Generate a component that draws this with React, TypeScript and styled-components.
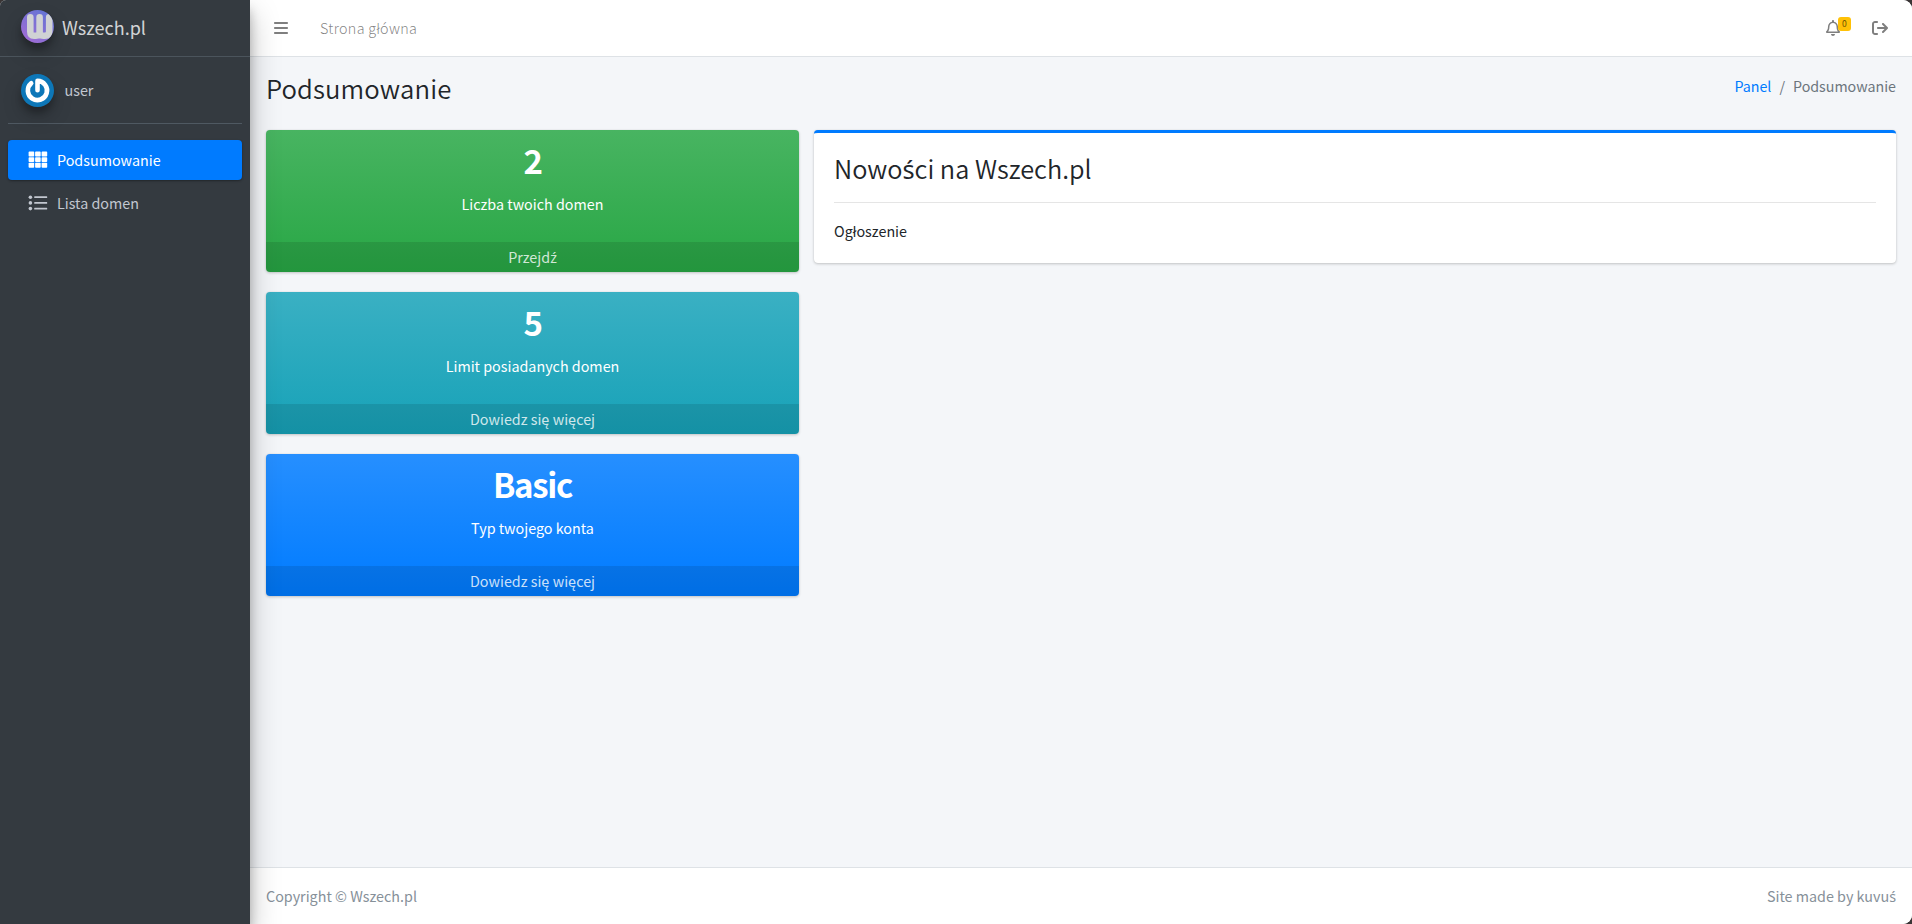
import React from 'react';
import styled, { createGlobalStyle } from 'styled-components';
import { FaRegBell } from 'react-icons/fa';
import { FaBars, FaArrowRightFromBracket } from 'react-icons/fa6';

const GlobalStyle = createGlobalStyle`
  *, *::before, *::after { box-sizing: border-box; }
  html { background: #3a3535; }
  body {
    margin: 0;
    font-family: "Noto Sans CJK SC", "Noto Sans", sans-serif;
    font-size: 14.33px;
    line-height: 24px;
    color: #212529;
  }
  a { text-decoration: none; color: inherit; }
  h1, h2, h3, p { margin: 0; font-weight: 400; }
`;

const Shell = styled.div`
  display: flex;
  height: 924px;
  overflow: hidden;
  border-radius: 6px 9px 9px 0;
  background: #f4f6f9;
`;

const Sidebar = styled.aside`
  position: relative;
  z-index: 2;
  flex: 0 0 250px;
  background: #343a40;
  box-shadow: 0 14px 28px rgba(0, 0, 0, 0.25), 0 10px 10px rgba(0, 0, 0, 0.22);
`;

const Brand = styled.a`
  display: flex;
  align-items: center;
  gap: 8px;
  height: 57px;
  padding: 0 0 3px 21px;
  border-bottom: 1px solid #4b545c;
  color: rgba(255, 255, 255, 0.8);
  font-size: 18px;
`;

const RoundMark = styled.svg`
  display: block;
  flex: none;
  width: 33px;
  height: 33px;
  border-radius: 50%;
  box-shadow: 0 10px 20px rgba(0, 0, 0, 0.19), 0 6px 6px rgba(0, 0, 0, 0.23);
`;

const UserPanel = styled.div`
  display: flex;
  align-items: center;
  gap: 10.5px;
  height: 67px;
  margin: 0 8px 16px;
  padding: 0 0 0 13px;
  border-bottom: 1px solid #4f5962;
  color: #c2c7d0;
`;

const Nav = styled.nav`
  display: flex;
  flex-direction: column;
  gap: 3px;
  padding: 0 8px;
`;

const NavItem = styled.a<{ $active?: boolean }>`
  display: flex;
  align-items: center;
  gap: 9px;
  height: 40px;
  padding-left: 20px;
  border-radius: 4px;
  color: ${(p) => (p.$active ? '#fff' : '#c2c7d0')};
  background: ${(p) => (p.$active ? '#007bff' : 'transparent')};
  box-shadow: ${(p) => (p.$active ? '0 1px 3px rgba(0,0,0,.12), 0 1px 2px rgba(0,0,0,.24)' : 'none')};
`;

const NavIcon = styled.svg`
  width: 20px;
  height: 18px;
  margin-top: -1px;
  fill: currentColor;
`;

const Main = styled.div`
  flex: 1;
  display: flex;
  flex-direction: column;
  min-width: 0;
`;

const Topbar = styled.header`
  display: flex;
  align-items: center;
  height: 57px;
  padding: 0 24px 0 23px;
  background: #fff;
  border-bottom: 1px solid #dee2e6;
  color: rgba(0, 0, 0, 0.5);
`;

const TopLink = styled.a`
  margin-left: 31px;
  font-weight: 300;
  letter-spacing: 0.33px;
`;

const TopActions = styled.div`
  display: flex;
  align-items: center;
  gap: 31px;
  margin-left: auto;
  svg { display: block; }
`;

const Bell = styled.span`
  position: relative;
`;

const Badge = styled.span`
  position: absolute;
  left: 13px;
  top: -3px;
  width: 13px;
  height: 14px;
  border-radius: 3px;
  background: #ffc107;
  color: #6b5200;
  font-size: 8.6px;
  line-height: 12px;
  text-align: center;
`;

const PageHead = styled.div`
  display: flex;
  justify-content: space-between;
  height: 73px;
  padding: 0 16px;
`;

const PageTitle = styled.h1`
  padding-top: 13px;
  font-size: 25.7px;
  letter-spacing: 0.12px;
  line-height: 35px;
  && { font-weight: 350; }
`;

const Crumbs = styled.div`
  display: flex;
  gap: 8px;
  padding-top: 17px;
  color: #6c757d;
  font-size: 14.25px;
  a { color: #007bff; }
`;

const Content = styled.main`
  flex: 1;
  display: grid;
  grid-template-columns: 533px 1fr;
  gap: 15px;
  align-items: start;
  padding: 0 16px;
`;

const Stack = styled.div`
  display: flex;
  flex-direction: column;
  gap: 20px;
`;

const StatBox = styled.section<{ $from: string; $to: string }>`
  display: flex;
  flex-direction: column;
  height: 142px;
  border-radius: 4px;
  overflow: hidden;
  color: #fff;
  text-align: center;
  background: linear-gradient(180deg, ${(p) => p.$from}, ${(p) => p.$to});
  box-shadow: 0 0 1px rgba(0, 0, 0, 0.125), 0 1px 3px rgba(0, 0, 0, 0.2);
`;

const StatBody = styled.div`
  height: 112px;
  padding-top: 9px;
`;

const StatValue = styled.h3`
  margin-bottom: 11px;
  letter-spacing: -1.3px;
  line-height: 42px;
  && { font-size: 33px; font-weight: 700; }
`;

const StatLink = styled.a`
  height: 30px;
  line-height: 30px;
  background: rgba(0, 0, 0, 0.1);
  color: rgba(255, 255, 255, 0.8);
`;

const NewsCard = styled.section`
  height: 133px;
  padding: 16px 20px 20px;
  background: #fff;
  border-top: 3px solid #007bff;
  border-radius: 4px;
  box-shadow: 0 0 1px rgba(0, 0, 0, 0.125), 0 1px 3px rgba(0, 0, 0, 0.2);
`;

const NewsTitle = styled.h2`
  height: 54px;
  margin-bottom: 16px;
  border-bottom: 1px solid #e5e5e5;
  font-size: 25.3px;
  line-height: 38px;
  && { font-weight: 350; }
`;

const Footer = styled.footer`
  display: flex;
  align-items: center;
  justify-content: space-between;
  height: 57px;
  padding: 0 16px;
  background: #fff;
  border-top: 1px solid #dee2e6;
  color: #869099;
`;

/* The main family has no ś or ź glyph, so these letters use Noto Sans. */
const AccentLetter = styled.span`
  font-family: "Noto Sans", sans-serif;
  font-weight: 400;
  line-height: 1;
`;

const Polish = ({ text }: { text: string }) => (
  <span>
    {text.split(/([śź])/).map((part, i) => (/^[śź]$/.test(part) ? <AccentLetter key={i}>{part}</AccentLetter> : part))}
  </span>
);

const stats = [
  { value: '2', label: 'Liczba twoich domen', link: 'Przejdź', from: '#48b461', to: '#28a745' },
  { value: '5', label: 'Limit posiadanych domen', link: 'Dowiedz się więcej', from: '#3ab0c3', to: '#17a2b8' },
  { value: 'Basic', label: 'Typ twojego konta', link: 'Dowiedz się więcej', from: '#268fff', to: '#007bff' },
];

const GridIcon = () => (
  <NavIcon viewBox="0 0 20 18">
    {[0.6, 6.2, 11.8].map((y) =>
      [0.6, 7.1, 13.6].map((x) => <rect key={`${x}-${y}`} x={x} y={y} width="5.6" height="4.9" rx="0.8" />),
    )}
  </NavIcon>
);

const ListIcon = () => (
  <NavIcon viewBox="0 0 20 18">
    {[3.2, 8.9, 14.6].map((y) => (
      <React.Fragment key={y}>
        <circle cx="2.4" cy={y} r="1.8" />
        <rect x="6.2" y={y - 0.9} width="13" height="1.8" rx="0.5" />
      </React.Fragment>
    ))}
  </NavIcon>
);

const BrandMark = () => (
  <RoundMark viewBox="0 0 33 33">
    <defs>
      <linearGradient id="brand" x1="0" y1="1" x2="0.7" y2="0">
        <stop offset="0" stopColor="#a86bd6" />
        <stop offset="1" stopColor="#6474d4" />
      </linearGradient>
    </defs>
    <rect width="33" height="33" fill="url(#brand)" />
    <path d="M9.3 7.4V21.5Q9.3 25.7 13 25.7H14.8Q18.6 25.7 18.6 21.5V7.4M18.6 21.5Q18.6 25.7 22.3 25.7H24Q28.2 25.7 28.2 21.5V7.4" fill="none" stroke="#d0d2d4" strokeWidth="6.6" strokeLinecap="round" />
  </RoundMark>
);

const UserMark = () => (
  <RoundMark viewBox="0 0 33 33">
    <rect width="33" height="33" fill="#0d77b8" />
    <path d="M10.2 9.2A9.6 9.6 0 1 0 16.5 6.9V16.3" fill="none" stroke="#fff" strokeWidth="4.6" strokeLinecap="round" strokeLinejoin="round" />
  </RoundMark>
);

export default function App() {
  return (
    <>
      <GlobalStyle />
      <Shell>
        <Sidebar>
          <Brand href="#"><BrandMark />Wszech.pl</Brand>
          <UserPanel><UserMark />user</UserPanel>
          <Nav>
            <NavItem href="#" $active><GridIcon />Podsumowanie</NavItem>
            <NavItem href="#"><ListIcon />Lista domen</NavItem>
          </Nav>
        </Sidebar>
        <Main>
          <Topbar>
            <FaBars size={16} />
            <TopLink href="#">Strona główna</TopLink>
            <TopActions>
              <Bell><FaRegBell size={16} /><Badge>0</Badge></Bell>
              <FaArrowRightFromBracket size={16} />
            </TopActions>
          </Topbar>
          <PageHead>
            <PageTitle>Podsumowanie</PageTitle>
            <Crumbs><a href="#">Panel</a><span>/</span><span>Podsumowanie</span></Crumbs>
          </PageHead>
          <Content>
            <Stack>
              {stats.map((s) => (
                <StatBox key={s.value} $from={s.from} $to={s.to}>
                  <StatBody>
                    <StatValue>{s.value}</StatValue>
                    <p>{s.label}</p>
                  </StatBody>
                  <StatLink href="#"><Polish text={s.link} /></StatLink>
                </StatBox>
              ))}
            </Stack>
            <NewsCard>
              <NewsTitle><Polish text="Nowości na Wszech.pl" /></NewsTitle>
              <p>Ogłoszenie</p>
            </NewsCard>
          </Content>
          <Footer><span>Copyright © Wszech.pl</span><Polish text="Site made by kuvuś" /></Footer>
        </Main>
      </Shell>
    </>
  );
}
